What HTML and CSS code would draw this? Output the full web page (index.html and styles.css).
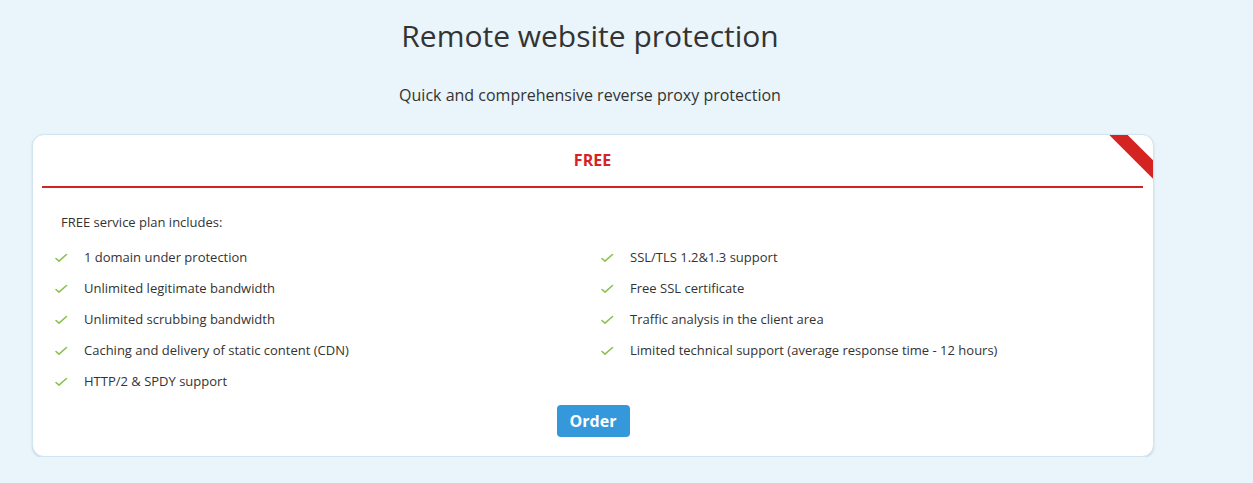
FILE: index.html
```html
<!DOCTYPE html>
<html lang="en">
<head>
<meta charset="utf-8">
<title>Remote website protection</title>
<link rel="stylesheet" href="styles.css">
</head>
<body>
<div class="page">
  <h1 class="title">Remote website protection</h1>
  <p class="subtitle">Quick and comprehensive reverse proxy protection</p>
  <div class="card">
    <span class="ribbon"></span>
    <div class="card-head">FREE</div>
    <div class="card-body">
      <p class="intro">FREE service plan includes:</p>
      <div class="features">
        <ul class="col">
          <li><svg class="check" viewBox="0 0 14 10"><path d="M2 5.5 L5 8.2 L12.5 1.5"/></svg>1 domain under protection</li>
          <li><svg class="check" viewBox="0 0 14 10"><path d="M2 5.5 L5 8.2 L12.5 1.5"/></svg>Unlimited legitimate bandwidth</li>
          <li><svg class="check" viewBox="0 0 14 10"><path d="M2 5.5 L5 8.2 L12.5 1.5"/></svg>Unlimited scrubbing bandwidth</li>
          <li><svg class="check" viewBox="0 0 14 10"><path d="M2 5.5 L5 8.2 L12.5 1.5"/></svg>Caching and delivery of static content (CDN)</li>
          <li><svg class="check" viewBox="0 0 14 10"><path d="M2 5.5 L5 8.2 L12.5 1.5"/></svg>HTTP/2 &amp; SPDY support</li>
        </ul>
        <ul class="col">
          <li><svg class="check" viewBox="0 0 14 10"><path d="M2 5.5 L5 8.2 L12.5 1.5"/></svg>SSL/TLS 1.2&amp;1.3 support</li>
          <li><svg class="check" viewBox="0 0 14 10"><path d="M2 5.5 L5 8.2 L12.5 1.5"/></svg>Free SSL certificate</li>
          <li><svg class="check" viewBox="0 0 14 10"><path d="M2 5.5 L5 8.2 L12.5 1.5"/></svg>Traffic analysis in the client area</li>
          <li><svg class="check" viewBox="0 0 14 10"><path d="M2 5.5 L5 8.2 L12.5 1.5"/></svg>Limited technical support (average response time - 12 hours)</li>
        </ul>
      </div>
      <div class="actions"><a class="btn" href="#">Order</a></div>
    </div>
  </div>
</div>
</body>
</html>
```

FILE: styles.css
```css
* { box-sizing: border-box; }
html, body { margin: 0; padding: 0; }
body {
  background: #e9f4fb;
  font-family: "Open Sans", "DejaVu Sans", sans-serif;
  color: #333;
}
.page {
  width: 1122px;
  margin-left: 32px;
  padding-top: 16px;
}
.title {
  margin: 0;
  padding-right: 6px;
  text-align: center;
  font-size: 30px;
  line-height: 40px;
  font-weight: 400;
  color: #333;
}
.subtitle {
  margin: 28px 0 28px;
  padding-right: 6px;
  text-align: center;
  font-size: 16px;
  line-height: 22px;
  color: #333;
}
.card {
  position: relative;
  overflow: hidden;
  background: #fff;
  border: 1px solid #d2e4ef;
  border-radius: 12px;
  box-shadow: 0 1px 2px rgba(120, 160, 190, 0.35);
}
.ribbon {
  position: absolute;
  top: 11px;
  right: -14px;
  width: 62px;
  height: 13px;
  background: #d42422;
  transform: rotate(45deg);
}
.card-head {
  margin: 0 10px 0 9px;
  padding: 14px 0 15px;
  border-bottom: 2px solid #d42422;
  text-align: center;
  font-size: 16px;
  line-height: 22px;
  font-weight: 700;
  color: #d42422;
}
.card-body {
  padding: 25px 20px 19px;
}
.intro {
  margin: 0 0 10px 8px;
  font-size: 13px;
  line-height: 18px;
}
.features {
  display: flex;
}
.col {
  list-style: none;
  margin: 0;
  padding: 0;
}
.col:first-child { width: 546px; }
.col li {
  display: flex;
  align-items: center;
  height: 31px;
  font-size: 13px;
  line-height: 18px;
}
.check {
  width: 14px;
  height: 10px;
  margin: 3px 16px 0 1px;
  flex: none;
  fill: none;
  stroke: #8cc152;
  stroke-width: 1.6;
  stroke-linecap: round;
  stroke-linejoin: round;
}
.actions {
  display: flex;
  justify-content: center;
  margin-top: 9px;
}
.btn {
  display: inline-flex;
  align-items: center;
  justify-content: center;
  width: 73px;
  height: 32px;
  background: #3498db;
  color: #fff;
  border-radius: 4px;
  font-size: 16px;
  font-weight: 700;
  text-decoration: none;
}
```
